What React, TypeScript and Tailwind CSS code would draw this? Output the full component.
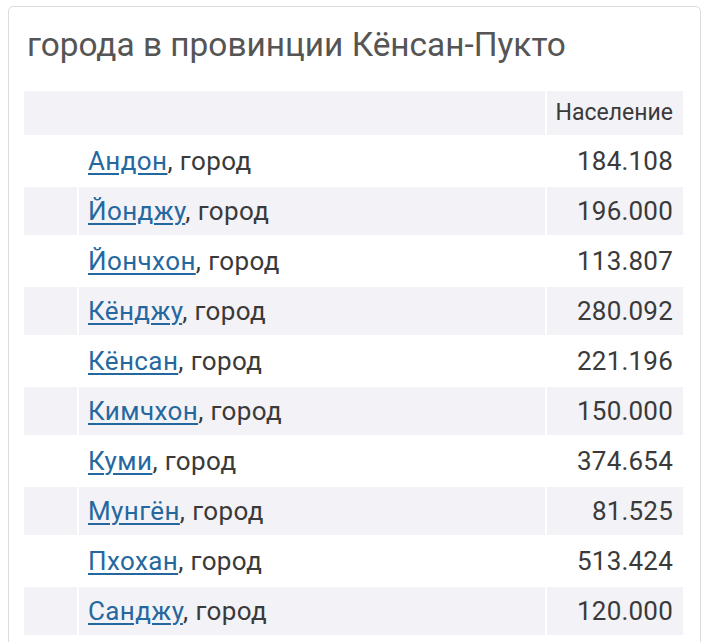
import React from "react";

const rows: [string, string][] = [
  ["Андон", "184.108"],
  ["Йонджу", "196.000"],
  ["Йончхон", "113.807"],
  ["Кёнджу", "280.092"],
  ["Кёнсан", "221.196"],
  ["Кимчхон", "150.000"],
  ["Куми", "374.654"],
  ["Мунгён", "81.525"],
  ["Пхохан", "513.424"],
  ["Санджу", "120.000"],
];

export default function App() {
  return (
    <div className="w-[720px] h-[642px] overflow-hidden bg-white" style={{ fontFamily: "Roboto, 'Noto Sans', sans-serif" }}>
      <div className="ml-[8px] mt-[6px] w-[693px] h-[700px] rounded-[5px] border border-[#dcdcdc] pt-[18px] px-[13px]">
        <h2 className="ml-[5px] text-[33.4px] leading-[40px] text-[#555555] font-normal">
          города в провинции Кёнсан-Пукто
        </h2>
        <div className="mt-[24px] grid grid-cols-[53px_466px_136px] gap-[2px] p-[2px]">
          <div className="col-span-2 h-[44px] bg-[#f3f2f7]"></div>
          <div className="h-[44px] bg-[#f3f2f7] flex items-center justify-end pr-[10px] text-[23px] text-[#3a3a3a]">
            Население
          </div>
          {rows.map(([name, pop], i) => {
            const bg = i % 2 === 1 ? "bg-[#f3f2f7]" : "bg-white";
            return (
              <React.Fragment key={name}>
                <div className={`h-[48px] ${bg}`}></div>
                <div className={`h-[48px] ${bg} flex items-center pl-[9px] text-[26px] tracking-[0.4px] text-[#3a3a3a]`}>
                  <span>
                    <a href="#" className="text-[#2568a0] underline underline-offset-[3px] decoration-[1.5px]">{name}</a>
                    , город
                  </span>
                </div>
                <div className={`h-[48px] ${bg} flex items-center justify-end pr-[10px] text-[26px] tracking-[0.2px] text-[#3a3a3a]`}>
                  {pop}
                </div>
              </React.Fragment>
            );
          })}
        </div>
      </div>
    </div>
  );
}
